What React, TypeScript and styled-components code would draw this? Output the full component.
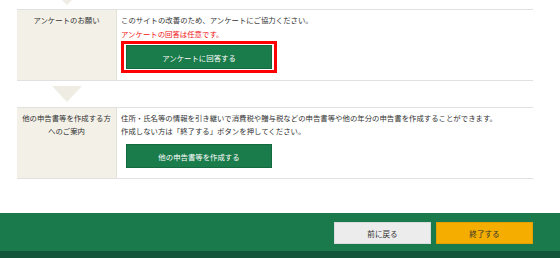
import React from "react";
import styled, { createGlobalStyle } from "styled-components";

const GlobalStyle = createGlobalStyle`
  html, body {
    margin: 0;
    padding: 0;
    background: #ffffff;
  }
  body {
    font-family: "Noto Sans CJK JP", "Noto Sans", sans-serif;
    color: #333333;
  }
`;

const Page = styled.div`
  width: 560px;
  height: 258px;
  overflow: hidden;
  display: flex;
  flex-direction: column;
`;

const Content = styled.div`
  padding: 0 27px 0 17px;
  display: flex;
  flex-direction: column;
`;

const ArrowRow = styled.div<{ $h: number; $pt: number }>`
  height: ${(p) => p.$h}px;
  padding-top: ${(p) => p.$pt}px;
  box-sizing: border-box;
  width: 100px;
  display: flex;
  justify-content: center;
`;

const Arrow = styled.div<{ $w: number; $h: number }>`
  width: 0;
  height: 0;
  border-left: ${(p) => p.$w / 2}px solid transparent;
  border-right: ${(p) => p.$w / 2}px solid transparent;
  border-top: ${(p) => p.$h}px solid #efede3;
`;

const Row = styled.div<{ $h: number }>`
  display: grid;
  grid-template-columns: 100px 1fr;
  height: ${(p) => p.$h}px;
  border-top: 1px solid #e1e1e1;
  border-bottom: 1px solid #e1e1e1;
  box-sizing: border-box;
`;

const Label = styled.div`
  background: #f2f0e7;
  border-right: 1px solid #e4e1d6;
  padding: 3px 2px 0;
  font-size: 7.4px;
  line-height: 13px;
  text-align: center;
`;

const Body = styled.div`
  padding: 3px 5px 0 4px;
  font-size: 7.4px;
  line-height: 13px;
`;

const Line = styled.p<{ $red?: boolean; $mt?: number }>`
  margin: ${(p) => p.$mt ?? 0}px 0 0;
  color: ${(p) => (p.$red ? "#f01010" : "#333333")};
  font-weight: 400;
  white-space: nowrap;
`;

const Focus = styled.div<{ $mt: number; $active?: boolean }>`
  margin-top: ${(p) => p.$mt}px;
  width: fit-content;
  border: 3px solid ${(p) => (p.$active ? "#ff0000" : "transparent")};
  padding: 1px 2px;
  background: #ffffff;
`;

const GreenButton = styled.button`
  display: block;
  width: 146px;
  height: 24px;
  background: #1b7c4b;
  border: 1px solid #15693f;
  color: #ffffff;
  font-family: inherit;
  font-size: 7.4px;
  padding: 0;
  cursor: pointer;
`;

const Footer = styled.div`
  margin-top: 34px;
  height: 39px;
  background: #1b7a4b;
  display: flex;
  justify-content: flex-end;
  align-items: flex-start;
  gap: 5px;
  padding: 9px 27px 0 0;
  box-sizing: border-box;
`;

const FooterButton = styled.button<{ $primary?: boolean }>`
  width: 97px;
  height: 22px;
  padding: 0;
  font-family: inherit;
  font-size: 7.6px;
  color: #333333;
  background: ${(p) => (p.$primary ? "#f5ae00" : "#ececec")};
  border: 1px solid ${(p) => (p.$primary ? "#e3a000" : "#dadada")};
  cursor: pointer;
`;

const Band = styled.div`
  height: 7px;
  background: #12553a;
`;

export default function App() {
  return (
    <Page>
      <GlobalStyle />
      <Content>
        <ArrowRow $h={9} $pt={0}>
          <Arrow $w={10} $h={5} />
        </ArrowRow>
        <Row $h={72}>
          <Label>アンケートのお願い</Label>
          <Body>
            <Line>このサイトの改善のため、アンケートにご協力ください。</Line>
            <Line $red $mt={1}>アンケートの回答は任意です。</Line>
            <Focus $mt={1} $active>
              <GreenButton>アンケートに回答する</GreenButton>
            </Focus>
          </Body>
        </Row>
        <ArrowRow $h={26} $pt={5}>
          <Arrow $w={31} $h={16} />
        </ArrowRow>
        <Row $h={72}>
          <Label>
            他の申告書等を作成する方
            <br />
            へのご案内
          </Label>
          <Body>
            <Line>住所・氏名等の情報を引き継いで消費税や贈与税などの申告書等や他の年分の申告書を作成することができます。</Line>
            <Line>作成しない方は「終了する」ボタンを押してください。</Line>
            <Focus $mt={3}>
              <GreenButton>他の申告書等を作成する</GreenButton>
            </Focus>
          </Body>
        </Row>
      </Content>
      <Footer>
        <FooterButton>前に戻る</FooterButton>
        <FooterButton $primary>終了する</FooterButton>
      </Footer>
      <Band />
    </Page>
  );
}
